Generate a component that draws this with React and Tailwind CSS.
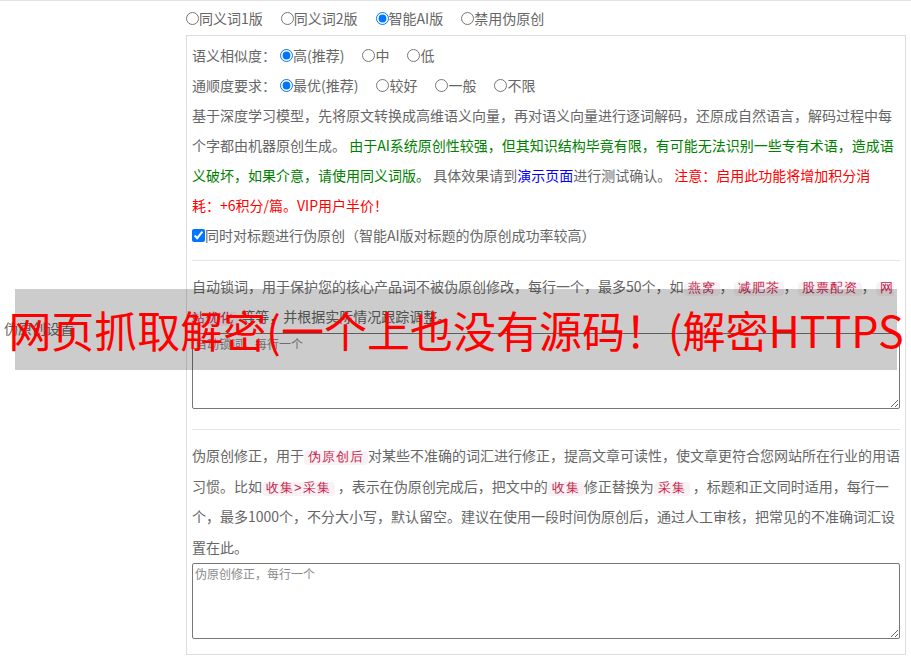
import React from "react";

const codeCls =
  "rounded-[4px] bg-[#f9f2f4] px-[4px] text-[12.6px] leading-none tracking-[1px] text-[#c7254e]";

function Code({ children }) {
  return <code className={codeCls}>{children}</code>;
}

function Radio({ name, label, checked, first }) {
  return (
    <label className="mr-[14px] flex items-center">
      <input
        type="radio"
        name={name}
        defaultChecked={checked}
        className={`${first ? "ml-0" : "ml-[4px]"} m-0 h-[13px] w-[13px] accent-[#0075ff]`}
      />
      <span>{label}</span>
    </label>
  );
}

export default function App() {
  return (
    <div className="relative h-[658px] w-[911px] overflow-hidden border-t border-[#e3e3e3] bg-white font-['Noto_Sans_CJK_SC','Noto_Sans',sans-serif] text-[14px] text-[#666]">
      <div className="flex items-center">
        <div className="w-[186px] shrink-0 pl-[4px] leading-[30px]">伪原创设置</div>
        <div className="w-[720px] shrink-0">
          <div className="flex h-[34px] items-center">
            <Radio name="mode" label="同义词1版" first />
            <Radio name="mode" label="同义词2版" />
            <Radio name="mode" label="智能AI版" checked />
            <Radio name="mode" label="禁用伪原创" />
          </div>
          <div className="border border-[#dddddd] px-[5px] pb-[15px] pt-[4px]">
            <div className="flex h-[30px] items-center">
              <span>语义相似度：</span>
              <Radio name="sim" label="高(推荐)" checked />
              <Radio name="sim" label="中" />
              <Radio name="sim" label="低" />
            </div>
            <div className="flex h-[30px] items-center">
              <span>通顺度要求：</span>
              <Radio name="flu" label="最优(推荐)" checked />
              <Radio name="flu" label="较好" />
              <Radio name="flu" label="一般" />
              <Radio name="flu" label="不限" />
            </div>
            <p className="leading-[30px]">
              基于深度学习模型，先将原文转换成高维语义向量，再对语义向量进行逐词解码，还原成自然语言，解码过程中每个字都由机器原创生成。{" "}
              <span className="text-[#008000]">
                由于AI系统原创性较强，但其知识结构毕竟有限，有可能无法识别一些专有术语，造成语义破坏，如果介意，请使用同义词版。
              </span>{" "}
              具体效果请到<span className="text-[#0000ff]">演示页面</span>进行测试确认。{" "}
              <span className="text-[#ff0000]">
                注意：启用此功能将增加积分消
                <br />
                耗：+6积分/篇。VIP用户半价！
              </span>
            </p>
            <label className="flex h-[30px] items-center">
              <input
                type="checkbox"
                defaultChecked
                className="m-0 h-[13px] w-[13px] accent-[#0075ff]"
              />
              <span>同时对标题进行伪原创（智能AI版对标题的伪原创成功率较高）</span>
            </label>

            <div className="mb-[10px] mt-[10px] h-px bg-[#e5e5e5]" />

            <p className="leading-[30px]">
              自动锁词，用于保护您的核心产品词不被伪原创修改，每行一个，最多50个，如<Code>燕窝</Code>，<Code>减肥茶</Code>，<Code>股票配资</Code>，<Code>网站优化</Code> 等等，并根据实际情况跟踪调整。
            </p>
            <textarea
              placeholder="自动锁词，每行一个"
              className="mt-[2px] block h-[76px] w-full rounded-[2px] border border-[#767676] px-[2px] py-[2px] text-[12px] leading-[16px] placeholder:text-[#8a8a8a]"
            />

            <div className="mb-[10px] mt-[20px] h-px bg-[#e5e5e5]" />

            <p className="leading-[30.6px]">
              伪原创修正，用于<Code>伪原创后</Code>对某些不准确的词汇进行修正，提高文章可读性，使文章更符合您网站所在行业的用语习惯。比如<Code>收集&gt;采集</Code> ，表示在伪原创完成后，把文中的<Code>收集</Code>修正替换为<Code>采集</Code> ，标题和正文同时适用，每行一个，最多1000个，不分大小写，默认留空。建议在使用一段时间伪原创后，通过人工审核，把常见的不准确词汇设置在此。
            </p>
            <textarea
              placeholder="伪原创修正，每行一个"
              className="mt-[1px] block h-[76px] w-full rounded-[2px] border border-[#767676] px-[2px] py-[2px] text-[12px] leading-[16px] placeholder:text-[#8a8a8a]"
            />
          </div>
        </div>
      </div>

      <div className="absolute left-[15px] top-[288px] flex h-[81px] w-[882px] items-center justify-center whitespace-nowrap bg-black/20 text-[43px] leading-none text-[#ff0000]">
        网页抓取解密(一个上也没有源码！(解密HTTPS
      </div>
    </div>
  );
}
